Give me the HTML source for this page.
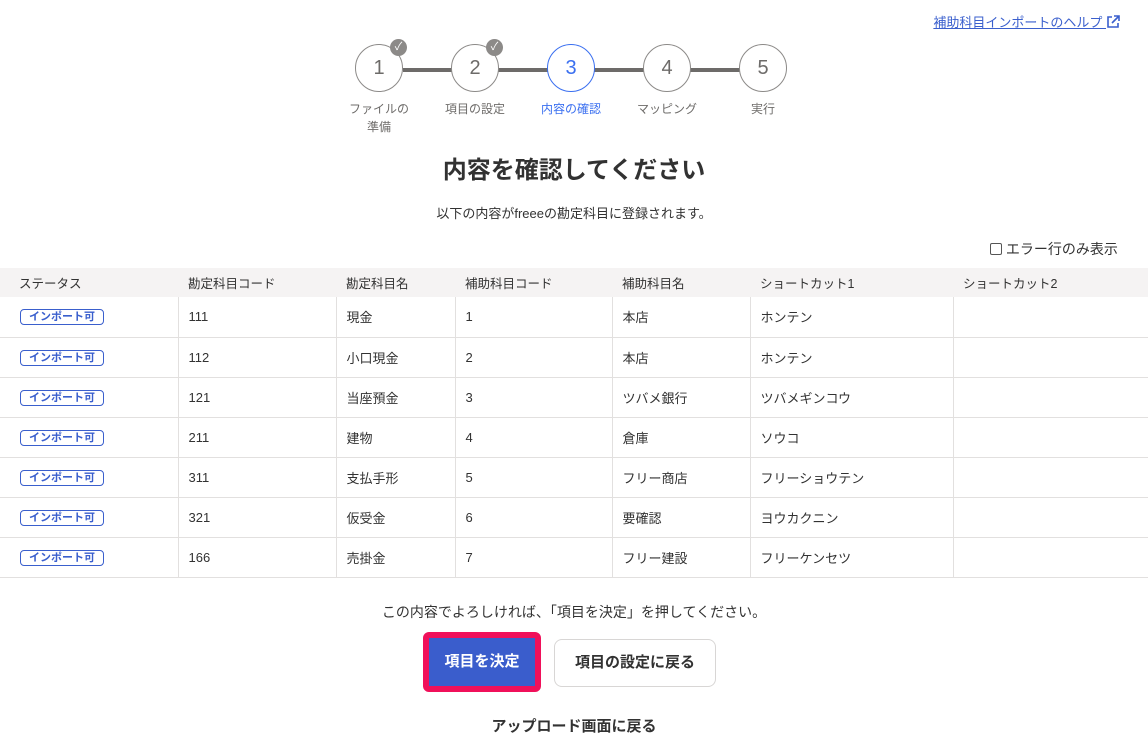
<!DOCTYPE html>
<html><head><meta charset="utf-8"><style>
*{margin:0;padding:0;box-sizing:border-box}
body{width:1148px;height:751px;background:#fff;font-family:"Liberation Sans","Noto Sans CJK JP",sans-serif;color:#323232;position:relative;overflow:hidden}
.a{position:absolute}
.help{right:28px;top:12px;font-size:13px;color:#3a5fcd;text-decoration:underline}
.circ{width:48px;height:48px;border:1px solid #8c8a88;border-radius:50%;background:#fff;font-size:20px;color:#6d6b69;text-align:center;line-height:46px;top:44px}
.line{height:4px;background:#6d6b69;top:68px}
.lbl{font-size:12px;color:#6d6b69;text-align:center;width:80px;top:100px;line-height:18px}
.chk{width:17px;height:17px;border-radius:50%;background:#8c8a88;top:39px;color:#fff;font-size:11px;text-align:center;line-height:17px}
table{position:absolute;top:268px;left:0;width:1148px;border-collapse:collapse;font-size:13px}
th{background:#f5f3f3;font-weight:normal;text-align:left;height:29px;padding-left:19px;font-size:12.5px;color:#323232}
td{height:40px;border-bottom:1px solid #e2e0df;border-left:1px solid #e2e0df;padding-left:10px;color:#323232}
td:first-child{border-left:none;padding-left:20px}
.badge{display:inline-block;border:1px solid #3a5fcd;border-radius:4px;color:#3a5fcd;font-size:11px;line-height:14px;padding:0 8px;font-weight:bold}
</style></head><body>
<div class="a help">補助科目インポートのヘルプ <svg width="14" height="14" viewBox="0 0 14 14" style="vertical-align:-2px"><path d="M6 2H2v10h10V8M8 1h5v5M13 1L6 8" stroke="#3a5fcd" stroke-width="1.6" fill="none"/></svg></div>
<div class="a line" style="left:403px;width:360px"></div>
<div class="a circ" style="left:355px">1</div>
<div class="a circ" style="left:451px">2</div>
<div class="a circ" style="left:547px;border-color:#3a6ff0;color:#3a6ff0">3</div>
<div class="a circ" style="left:643px">4</div>
<div class="a circ" style="left:739px">5</div>
<div class="a chk" style="left:390px">✓</div>
<div class="a chk" style="left:486px">✓</div>
<div class="a lbl" style="left:339px">ファイルの<br>準備</div>
<div class="a lbl" style="left:435px">項目の設定</div>
<div class="a lbl" style="left:531px;color:#3a6ff0">内容の確認</div>
<div class="a lbl" style="left:627px">マッピング</div>
<div class="a lbl" style="left:723px">実行</div>
<div class="a" style="left:0;width:1148px;top:150px;text-align:center;font-size:24px;font-weight:bold">内容を確認してください</div>
<div class="a" style="left:0;width:1148px;top:203px;text-align:center;font-size:13px">以下の内容がfreeeの勘定科目に登録されます。</div>
<div class="a" style="left:990px;top:239px;font-size:14px"><span style="display:inline-block;width:12px;height:12px;border:1px solid #555;border-radius:2px;vertical-align:-1px"></span> エラー行のみ表示</div>
<table>
<tr><th style="width:178px">ステータス</th><th style="width:158px;padding-left:10px">勘定科目コード</th><th style="width:119px;padding-left:10px">勘定科目名</th><th style="width:157px;padding-left:10px">補助科目コード</th><th style="width:138px;padding-left:10px">補助科目名</th><th style="width:203px;padding-left:10px">ショートカット1</th><th style="padding-left:10px">ショートカット2</th></tr>
<tr><td><span class="badge">インポート可</span></td><td>111</td><td>現金</td><td>1</td><td>本店</td><td>ホンテン</td><td></td></tr>
<tr><td><span class="badge">インポート可</span></td><td>112</td><td>小口現金</td><td>2</td><td>本店</td><td>ホンテン</td><td></td></tr>
<tr><td><span class="badge">インポート可</span></td><td>121</td><td>当座預金</td><td>3</td><td>ツバメ銀行</td><td>ツバメギンコウ</td><td></td></tr>
<tr><td><span class="badge">インポート可</span></td><td>211</td><td>建物</td><td>4</td><td>倉庫</td><td>ソウコ</td><td></td></tr>
<tr><td><span class="badge">インポート可</span></td><td>311</td><td>支払手形</td><td>5</td><td>フリー商店</td><td>フリーショウテン</td><td></td></tr>
<tr><td><span class="badge">インポート可</span></td><td>321</td><td>仮受金</td><td>6</td><td>要確認</td><td>ヨウカクニン</td><td></td></tr>
<tr><td><span class="badge">インポート可</span></td><td>166</td><td>売掛金</td><td>7</td><td>フリー建設</td><td>フリーケンセツ</td><td></td></tr>
</table>
<div class="a" style="left:0;width:1148px;top:602px;text-align:center;font-size:14px">この内容でよろしければ、「項目を決定」を押してください。</div>
<div class="a" style="left:423px;top:632px;width:118px;height:60px;border:6px solid #f0105a;border-radius:6px;background:#3a5dcc;color:#fff;font-weight:bold;font-size:15px;text-align:center;line-height:48px">項目を決定</div>
<div class="a" style="left:554px;top:639px;width:162px;height:48px;border:1px solid #d8d6d5;border-radius:8px;font-weight:bold;font-size:15px;text-align:center;line-height:46px">項目の設定に戻る</div>
<div class="a" style="left:0;width:1148px;top:715px;text-align:center;font-size:15px;font-weight:bold">アップロード画面に戻る</div>
</body></html>
